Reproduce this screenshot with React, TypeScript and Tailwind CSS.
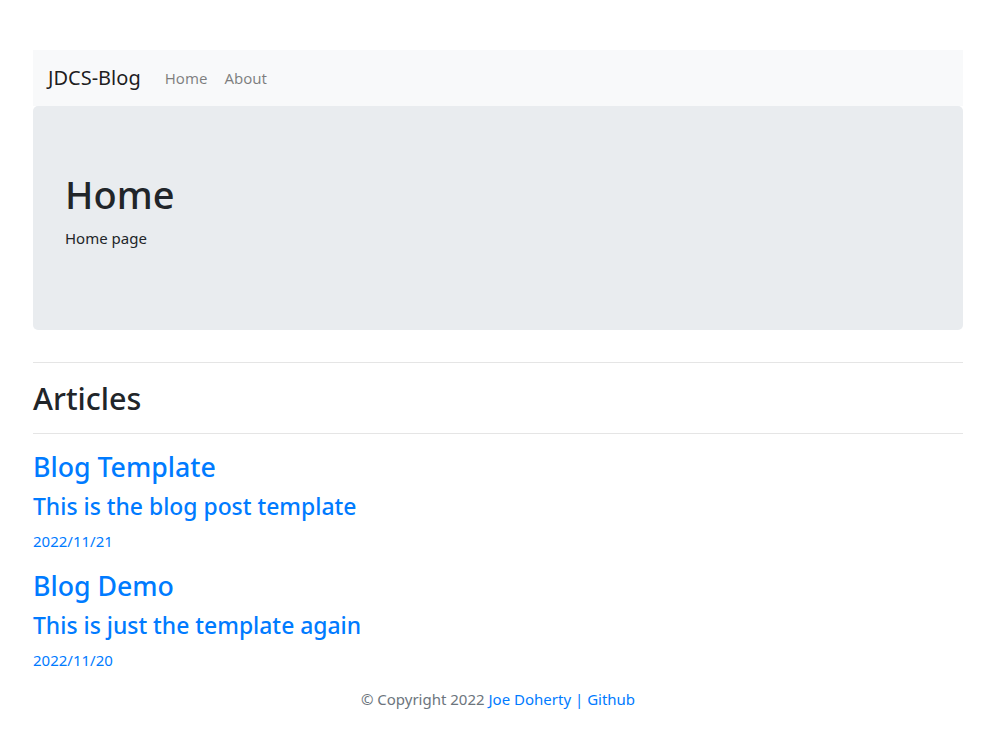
export default function App() {
  const font = { fontFamily: '"Noto Sans", "Open Sans", sans-serif' };
  return (
    <div className="bg-white min-h-[753px] text-[#212529]" style={font}>
      <div className="w-[930px] ml-[33px] pt-[50px]">
        <nav className="h-[56px] bg-[#f8f9fa] flex items-center px-[15px]">
          <span className="text-[20px] leading-[30px] text-black/90 mr-[24px]">JDCS-Blog</span>
          <a className="text-[15px] leading-[24px] text-black/50 mr-[17px]">Home</a>
          <a className="text-[15px] leading-[24px] text-black/50">About</a>
        </nav>
        <div className="bg-[#e9ecef] rounded-[5px] px-[32px] py-[64px]">
          <h1 className="text-[38px] leading-[48px] font-medium mb-[8px]">Home</h1>
          <p className="text-[15px] leading-[24px] mb-[16px]">Home page</p>
        </div>
        <hr className="mt-[32px] border-t border-black/10" />
        <h2 className="mt-[16px] text-[30.5px] leading-[38px] font-medium">Articles</h2>
        <hr className="mt-[16px] border-t border-black/10" />
        <div className="mt-[16px]">
          <h3 className="text-[26.7px] leading-[34px] font-medium text-[#007bff]">Blog Template</h3>
          <h4 className="mt-[8px] text-[22.9px] leading-[29px] font-medium text-[#007bff]">This is the blog post template</h4>
          <p className="mt-[8px] text-[15px] leading-[24px] text-[#007bff]">2022/11/21</p>
        </div>
        <div className="mt-[16px]">
          <h3 className="text-[26.7px] leading-[34px] font-medium text-[#007bff]">Blog Demo</h3>
          <h4 className="mt-[8px] text-[22.9px] leading-[29px] font-medium text-[#007bff]">This is just the template again</h4>
          <p className="mt-[8px] text-[15px] leading-[24px] text-[#007bff]">2022/11/20</p>
        </div>
        <footer className="mt-[15px] text-center text-[15px] leading-[24px] text-[#6c757d]">
          © Copyright 2022 <a className="text-[#007bff]">Joe Doherty</a> <span className="text-[#007bff]">|</span> <a className="text-[#007bff]">Github</a>
        </footer>
      </div>
    </div>
  );
}
